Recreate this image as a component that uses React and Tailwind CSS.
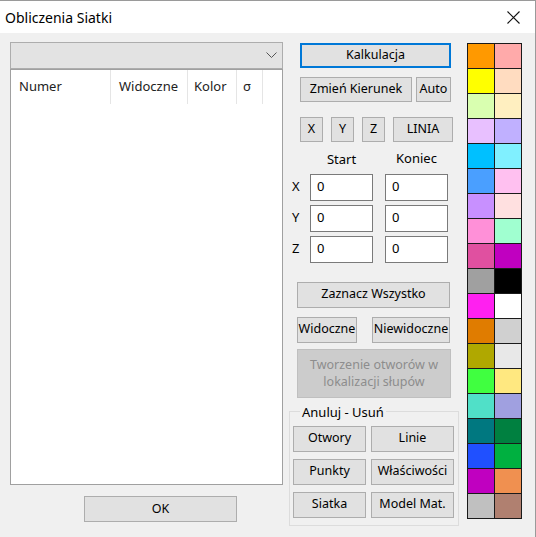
const palette = [
  ['#ff9900', '#ffaaaa'],
  ['#ffff00', '#ffdcc0'],
  ['#d9ffb0', '#ffefc0'],
  ['#e8c0ff', '#c0b0ff'],
  ['#00c0ff', '#80f0ff'],
  ['#4a9fff', '#ffc0f0'],
  ['#c890ff', '#ffe0e0'],
  ['#ff90d8', '#a0ffd0'],
  ['#e050a0', '#c000c0'],
  ['#a0a0a0', '#000000'],
  ['#ff20f0', '#ffffff'],
  ['#e07c00', '#d0d0d0'],
  ['#b0a800', '#e8e8e8'],
  ['#40ff40', '#ffe880'],
  ['#50e0c8', '#a0a0e0'],
  ['#007880', '#008040'],
  ['#2050ff', '#00b040'],
  ['#c000c0', '#f09050'],
  ['#c0c0c0', '#b08070'],
]

const base =
  'flex items-center justify-center overflow-hidden whitespace-nowrap bg-[#e1e1e1] text-[12.5px] text-black'
const btn = `${base} border border-[#adadad]`

function Field({ label }) {
  return (
    <div className="flex items-start">
      <span className="ml-[3px] mt-[3px] w-[18px] text-[13px] text-black">{label}</span>
      <div className="flex h-[27px] w-[63px] items-center border border-[#7a7a7a] bg-white pl-[6px] text-[13px]">0</div>
      <div className="ml-[12px] flex h-[27px] w-[63px] items-center border border-[#7a7a7a] bg-white pl-[6px] text-[13px]">0</div>
    </div>
  )
}

export default function App() {
  return (
    <div className="flex h-[537px] w-[536px] flex-col border-t border-r border-[#9a9a9a] bg-[#f0f0f0] font-['Noto_Sans',sans-serif] text-black">
      <div className="flex h-[32px] shrink-0 items-center justify-between bg-white pl-[5px] pr-[15px]">
        <span className="text-[14px]">Obliczenia Siatki</span>
        <svg width="13" height="13" viewBox="0 0 13 13">
          <path d="M0.5 0.5 L12.5 12.5 M12.5 0.5 L0.5 12.5" stroke="#111" strokeWidth="1.1" />
        </svg>
      </div>

      <div className="flex">
        {/* left column */}
        <div className="ml-[10px] mt-[9px] flex w-[273px] flex-col">
          <div className="flex h-[27px] items-center justify-end border border-[#adadad] bg-[#e3e3e3] pr-[5px]">
            <svg width="11" height="7" viewBox="0 0 11 7">
              <path d="M0.5 0.5 L5.5 5.5 L10.5 0.5" fill="none" stroke="#555" strokeWidth="1" />
            </svg>
          </div>
          <div className="h-[416px] border border-[#a0a0a0] bg-white">
            <div className="flex h-[34px] text-[13px] text-[#222]">
              <div className="flex w-[100px] items-center border-r border-[#e5e5e5] pl-[8px]">Numer</div>
              <div className="flex w-[77px] items-center border-r border-[#e5e5e5] pl-[8px]">Widoczne</div>
              <div className="flex w-[49px] items-center border-r border-[#e5e5e5] pl-[6px]">Kolor</div>
              <div className="flex w-[26px] items-center border-r border-[#e5e5e5] pl-[6px]">σ</div>
            </div>
          </div>
          <button className={`${btn} ml-[74px] mt-[11px] h-[26px] w-[153px]`}>OK</button>
        </div>

        {/* right column */}
        <div className="ml-[6px] flex w-[170px] flex-col">
          <button className={`${base} ml-[11px] mt-[10px] h-[25px] w-[151px] border-2 border-[#0078d7]`}>Kalkulacja</button>
          <div className="ml-[11px] mt-[9px] flex">
            <button className={`${btn} h-[25px] w-[112px]`}>Zmień Kierunek</button>
            <button className={`${btn} ml-[4px] h-[25px] w-[35px]`}>Auto</button>
          </div>
          <div className="ml-[11px] mt-[15px] flex">
            <button className={`${btn} h-[25px] w-[23px]`}>X</button>
            <button className={`${btn} ml-[8px] h-[25px] w-[23px]`}>Y</button>
            <button className={`${btn} ml-[8px] h-[25px] w-[23px]`}>Z</button>
            <button className={`${btn} ml-[8px] h-[25px] w-[60px]`}>LINIA</button>
          </div>
          <div className="mt-[7px] flex text-[13px]">
            <span className="ml-[21px] mt-[1px] w-[63px] text-center">Start</span>
            <span className="ml-[12px] w-[63px] text-center">Koniec</span>
          </div>
          <div className="mt-[4px] flex flex-col gap-[4px]">
            <Field label="X" />
            <Field label="Y" />
            <Field label="Z" />
          </div>
          <button className={`${btn} ml-[8px] mt-[19px] h-[26px] w-[153px]`}>Zaznacz Wszystko</button>
          <div className="ml-[8px] mt-[9px] flex">
            <button className={`${btn} h-[26px] w-[60px]`}>Widoczne</button>
            <button className={`${btn} ml-[15px] h-[26px] w-[78px]`}>Niewidoczne</button>
          </div>
          <button className="ml-[8px] mt-[6px] flex h-[49px] w-[154px] flex-col items-center justify-center border border-[#bfbfbf] bg-[#cccccc] text-[12.5px] leading-[17px] text-[#8d8d8d]">
            <span>Tworzenie otworów w</span>
            <span>lokalizacji słupów</span>
          </button>
          <fieldset className="mt-[6px] h-[122px] w-[170px] border border-[#dcdcdc] px-[3px]">
            <legend className="ml-[7px] px-[2px] text-[13px] leading-[16px]">Anuluj - Usuń</legend>
            <div className="mt-[6px] grid grid-cols-[73px_83px] gap-x-[5px] gap-y-[7px]">
              <button className={`${btn} h-[26px]`}>Otwory</button>
              <button className={`${btn} h-[26px]`}>Linie</button>
              <button className={`${btn} h-[26px]`}>Punkty</button>
              <button className={`${btn} h-[26px]`}>Właściwości</button>
              <button className={`${btn} h-[26px]`}>Siatka</button>
              <button className={`${btn} h-[26px]`}>Model Mat.</button>
            </div>
          </fieldset>
        </div>

        {/* colour palette */}
        <div className="ml-[8px] mt-[10px] grid w-[55px] grid-cols-2 self-start border-l border-t border-[#1a1a1a]">
          {palette.flat().map((c, i) => (
            <div key={i} className="h-[25px] border-r border-b border-[#1a1a1a]" style={{ backgroundColor: c }} />
          ))}
        </div>
      </div>
    </div>
  )
}
